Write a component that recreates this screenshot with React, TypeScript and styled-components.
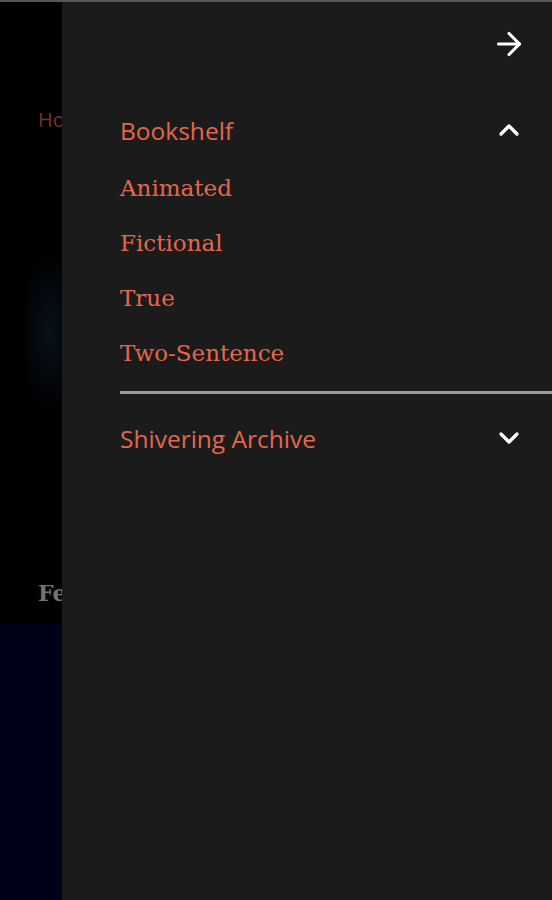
import styled, { createGlobalStyle } from 'styled-components'
import { ArrowRight, ChevronDown, ChevronUp } from 'lucide-react'

const GlobalStyle = createGlobalStyle`
  html, body {
    margin: 0;
    padding: 0;
    background: #000;
  }
  * {
    box-sizing: border-box;
  }
`

const Page = styled.div`
  min-height: 900px;
  border-top: 2px solid #565656;
  background: #000;
  display: flex;
  flex-direction: column;
  overflow: hidden;
`

const Header = styled.header`
  height: 230px;
  padding: 104px 38px 0;
`

const HomeLink = styled.span`
  font-family: 'Open Sans', sans-serif;
  font-size: 20px;
  color: #763628;
`

const Hero = styled.div`
  height: 330px;
  background: radial-gradient(ellipse 30px 80px at 50px 100px, #08101a 0%, #03070c 60%, #000 100%);
`

const Featured = styled.h2`
  margin: 0;
  height: 61px;
  padding: 18px 38px 0;
  font-family: 'DejaVu Serif', serif;
  font-size: 22px;
  font-weight: bold;
  color: #737373;
`

const Section = styled.section`
  flex: 1;
  background: #00001a;
`

const Drawer = styled.aside`
  position: fixed;
  top: 2px;
  left: 62px;
  right: 0;
  bottom: 0;
  background: #1b1b1b;
  padding-top: 24px;
`

const CloseRow = styled.div`
  display: flex;
  justify-content: flex-end;
  padding-right: 25px;
  height: 36px;
  color: #fff;
`

const Nav = styled.nav`
  margin-top: 43px;
  padding-left: 58px;
`

const GroupRow = styled.div`
  display: flex;
  align-items: center;
  justify-content: space-between;
  height: 50px;
  padding-right: 27px;
  color: #fff;
`

const GroupLabel = styled.span`
  font-family: 'Open Sans', sans-serif;
  font-size: 24.5px;
  color: #e4674d;
`

const SubList = styled.ul`
  list-style: none;
  margin: 5px 0 0;
  padding: 0;
`

const SubItem = styled.li`
  height: 55px;
  display: flex;
  align-items: center;
  font-family: 'DejaVu Serif', serif;
  font-size: 23px;
  color: #e4674d;
`

const Divider = styled.hr<{ $gap: number }>`
  margin: ${({ $gap }) => $gap}px 0 19px;
  border: none;
  height: 3px;
  background: #9a9a9a;
`

const subItems = ['Animated', 'Fictional', 'True', 'Two-Sentence']

export default function App() {
  return (
    <>
      <GlobalStyle />
      <Page>
        <Header>
          <HomeLink>Home</HomeLink>
        </Header>
        <Hero />
        <Featured>Featured</Featured>
        <Section />
      </Page>
      <Drawer>
        <CloseRow>
          <ArrowRight size={36} strokeWidth={2.1} />
        </CloseRow>
        <Nav>
          <GroupRow>
            <GroupLabel>Bookshelf</GroupLabel>
            <ChevronUp size={32} strokeWidth={2.5} />
          </GroupRow>
          <SubList>
            {subItems.map((item) => (
              <SubItem key={item}>{item}</SubItem>
            ))}
          </SubList>
          <Divider $gap={11} />
          <GroupRow>
            <GroupLabel>Shivering Archive</GroupLabel>
            <ChevronDown size={32} strokeWidth={2.5} />
          </GroupRow>
        </Nav>
      </Drawer>
    </>
  )
}
